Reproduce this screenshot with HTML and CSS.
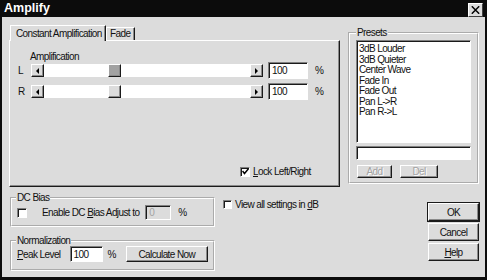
FILE: index.html
```html
<!DOCTYPE html>
<html lang="en">
<head>
  <meta charset="UTF-8" />
  <title>Amplify</title>
  <link rel="stylesheet" href="styles.css">
</head>
<body>
<div class="window">
  <div class="titlebar">
    <span class="title">Amplify</span>
    <span class="close"><svg width="9" height="8" viewBox="0 0 9 8"><path d="M0.8 0.3 L8.2 7.7 M8.2 0.3 L0.8 7.7" stroke="#000" stroke-width="1.5"/></svg></span>
  </div>

  <div class="client">
    <!-- ── tabs + presets ───────────────── -->
    <div class="top">
      <div class="tabs">
        <div class="tabstrip">
          <div class="tab active">Constant Amplification</div>
          <div class="tab">Fade</div>
        </div>
        <div class="panel">
          <div class="caption">Amplification</div>

          <div class="amp-row">
            <span class="ch">L</span>
            <div class="scroll">
              <span class="arrow raised"><svg width="3" height="6" viewBox="0 0 3 6"><polygon points="3,0 0,3 3,6" fill="#000"/></svg></span>
              <div class="track"><span class="thumb raised focus"></span></div>
              <span class="arrow raised"><svg width="3" height="6" viewBox="0 0 3 6"><polygon points="0,0 3,3 0,6" fill="#000"/></svg></span>
            </div>
            <span class="edit amp">100</span>
            <span class="pct">%</span>
          </div>

          <div class="amp-row second">
            <span class="ch">R</span>
            <div class="scroll">
              <span class="arrow raised"><svg width="3" height="6" viewBox="0 0 3 6"><polygon points="3,0 0,3 3,6" fill="#000"/></svg></span>
              <div class="track"><span class="thumb raised"></span></div>
              <span class="arrow raised"><svg width="3" height="6" viewBox="0 0 3 6"><polygon points="0,0 3,3 0,6" fill="#000"/></svg></span>
            </div>
            <span class="edit amp">100</span>
            <span class="pct">%</span>
          </div>

          <div class="check lock">
            <span class="box"><svg width="7" height="7" viewBox="0 0 7 7"><path d="M0.5 3 L2.5 5.5 L6.5 0.8" stroke="#000" stroke-width="1.5" fill="none"/></svg></span>
            <span><u>L</u>ock Left/Right</span>
          </div>
        </div>
      </div>

      <fieldset class="group presets">
        <legend>Presets</legend>
        <ul class="list">
          <li>3dB Louder</li>
          <li>3dB Quieter</li>
          <li>Center Wave</li>
          <li>Fade In</li>
          <li>Fade Out</li>
          <li>Pan L-&gt;R</li>
          <li>Pan R-&gt;L</li>
        </ul>
        <span class="edit name"></span>
        <div class="preset-btns">
          <span class="btn raised disabled add">Add</span>
          <span class="btn raised disabled del">Del</span>
        </div>
      </fieldset>
    </div>

    <!-- ── bias / normalize / buttons ───── -->
    <div class="bottom">
      <div class="groups">
        <fieldset class="group dc">
          <legend>DC Bias</legend>
          <div class="dc-row">
            <span class="box"></span>
            <span class="dc-text">Enable DC <u>B</u>ias Adjust to</span>
            <span class="edit bias">0</span>
            <span class="pct">%</span>
          </div>
        </fieldset>
        <fieldset class="group norm">
          <legend>Normalization</legend>
          <div class="norm-row">
            <span><u>P</u>eak Level</span>
            <span class="edit peak">100</span>
            <span class="pct">%</span>
            <span class="btn raised calc">Calculate Now</span>
          </div>
        </fieldset>
      </div>

      <div class="check view">
        <span class="box"></span>
        <span>View all settings in <u>d</u>B</span>
      </div>

      <div class="actions">
        <span class="btn raised default">OK</span>
        <span class="btn raised">Cancel</span>
        <span class="btn raised"><u>H</u>elp</span>
      </div>
    </div>
  </div>
</div>
</body>
</html>
```

FILE: styles.css
```css
html,body{margin:0;padding:0;background:#0c0c0c;}
body{font-family:"Liberation Sans",Arial,sans-serif;font-size:10px;letter-spacing:-.6px;color:#111;}
*{box-sizing:border-box;}

.window{width:487px;height:280px;background:#dcdcdc;border:solid #0c0c0c;border-width:0 2px 3px 2px;display:flex;flex-direction:column;}
.titlebar{height:17px;background:#0c0c0c;display:flex;align-items:flex-start;justify-content:space-between;padding:0 2px 0 2px;}
.title{color:#fff;font-weight:bold;font-size:12.5px;letter-spacing:0;line-height:17px;}
.close{width:15px;height:14px;margin-top:3px;background:#dcdcdc;display:flex;align-items:center;justify-content:center;border:1px solid;border-color:#fff #404040 #404040 #fff;}

.raised{background:#dcdcdc;border:1px solid;border-color:#fff #1a1a1a #1a1a1a #fff;box-shadow:inset -1px -1px #8a8a8a;}
.edit{background:#fff;border:1px solid;border-color:#808080 #fff #fff #808080;box-shadow:inset 1px 1px #1a1a1a;display:flex;align-items:center;padding-left:3px;}

.client{flex:1;padding:8px 6px 0 7px;display:flex;flex-direction:column;}
.top{display:flex;gap:8px;height:164px;}

/* tabs */
.tabs{width:331px;display:flex;flex-direction:column;}
.tabstrip{display:flex;align-items:flex-end;height:15px;padding-left:1px;position:relative;z-index:1;}
.tab{height:13px;line-height:11px;padding:0 4px 0 3px;border:1px solid;border-bottom:none;border-color:#fff #1a1a1a #fff #fff;box-shadow:inset -1px 0 #8a8a8a;background:#dcdcdc;}
.tab.active{height:16px;width:96px;margin-bottom:-1px;padding:2px 0 0 5px;}
.panel{height:147px;border:1px solid;border-color:#fff #1a1a1a #1a1a1a #fff;box-shadow:inset -1px -1px #8a8a8a;padding:10px 0 9px 8px;display:flex;flex-direction:column;}
.caption{margin-left:12px;height:11px;line-height:11px;}

.amp-row{display:flex;align-items:center;height:17px;}
.amp-row.second{margin-top:4px;}
.ch{width:13px;}
.scroll{display:flex;height:13px;width:232px;}
.arrow{width:13px;height:13px;display:flex;align-items:center;justify-content:center;}
.track{flex:1;background:#fff;display:flex;}
.thumb{width:13px;height:13px;margin-left:64px;}
.thumb.focus{background:#a2a2a2;}
.edit.amp{width:40px;height:17px;margin-left:5px;}
.pct{margin-left:7px;}

.check{display:flex;align-items:center;}
.box{width:10px;height:10px;background:#fff;border:1px solid;border-color:#808080 #fff #fff #808080;box-shadow:inset 1px 1px #1a1a1a;display:flex;align-items:center;justify-content:center;}
.lock{margin-top:auto;margin-left:222px;gap:3px;}

/* group boxes */
.group{margin:0;border:2px groove #fff;}
.group legend{padding:0 1px;line-height:12px;height:12px;}

.presets{width:131px;height:157px;margin-top:2px;padding:1px 6px 0 6px;}
.list{list-style:none;margin:0;padding:3px 0 0 2px;width:115px;height:103px;background:#fff;border:1px solid;border-color:#808080 #fff #fff #808080;box-shadow:inset 1px 1px #1a1a1a;}
.list li{line-height:10.5px;white-space:nowrap;}
.edit.name{width:115px;height:14px;margin-top:3px;}
.preset-btns{display:flex;margin-top:5px;padding-left:1px;}
.btn{display:flex;align-items:center;justify-content:center;}
.disabled{color:#a3a3a3;text-shadow:1px 1px #fff;}
.add{width:35px;height:13px;}
.del{width:38px;height:13px;margin-left:8px;}

/* bottom area */
.bottom{display:flex;align-items:flex-start;}
.groups{width:205px;margin-left:1px;display:flex;flex-direction:column;}
.dc{height:35px;margin-top:3px;padding:0 4px;}
.dc-row{display:flex;align-items:center;height:15px;margin-top:1px;padding-left:1px;}
.dc-text{margin-left:15px;}
.edit.bias{width:26px;height:15px;margin-left:6px;color:#a3a3a3;background:#dcdcdc;}
.norm{height:36px;margin-top:8px;padding:0 4px;}
.norm-row{display:flex;align-items:center;height:16px;margin-top:-1px;padding-left:1px;}
.edit.peak{width:33px;height:16px;margin-left:9px;}
.norm-row .pct{margin-left:5px;}
.calc{width:82px;height:16px;margin-left:10px;}

.view{margin:10px 0 0 8px;gap:3px;}
.view .box{width:9px;height:9px;}

.actions{margin:14px 0 0 auto;display:flex;flex-direction:column;gap:2px;}
.actions .btn{width:51px;height:18px;}
.actions .default{outline:1px solid #1a1a1a;outline-offset:0;}
```
